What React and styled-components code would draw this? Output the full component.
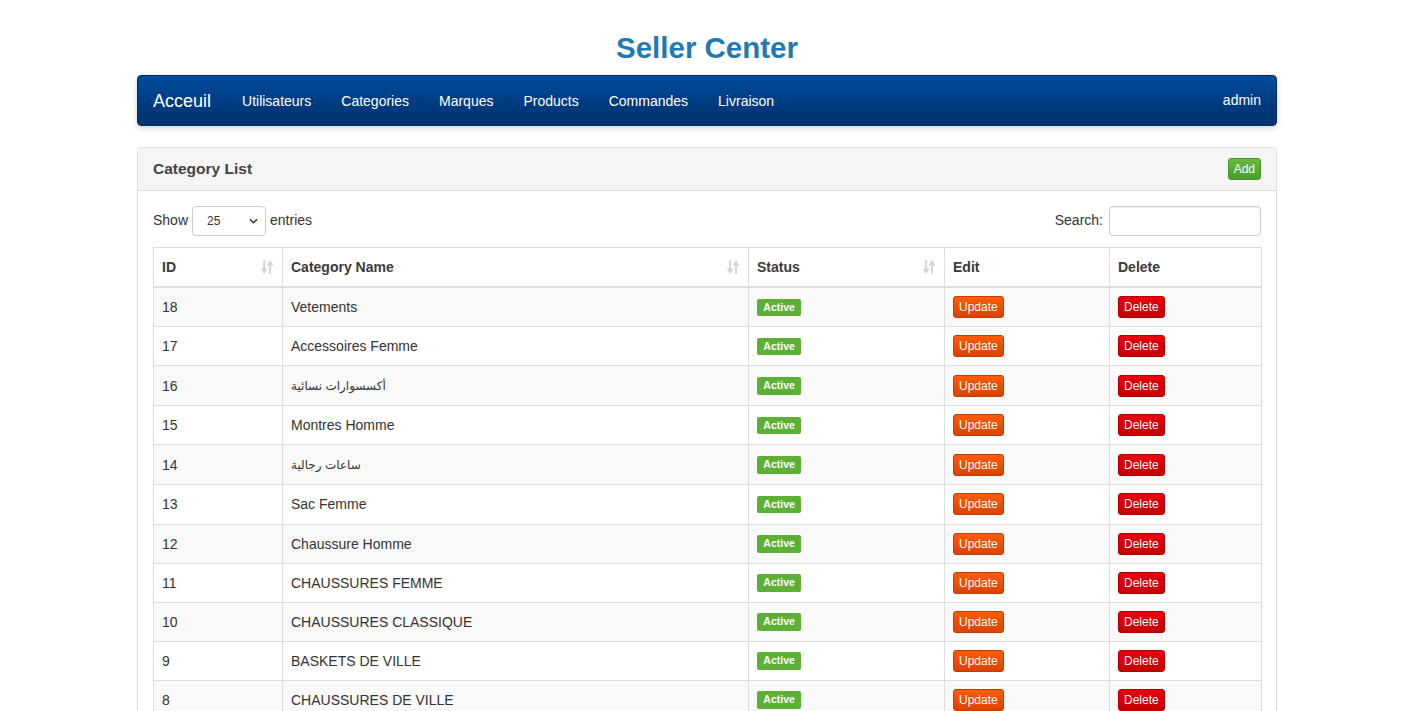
import React from 'react';
import styled, {createGlobalStyle} from 'styled-components';

const GlobalStyle = createGlobalStyle`
    html, body {
        margin: 0;
        padding: 0;
        overflow: hidden;
        background: #fff;
    }
    body {
        font-family: "Liberation Sans", Arial, "DejaVu Sans", sans-serif;
        font-size: 14px;
        line-height: 1.42857;
        color: #333;
    }
    * { box-sizing: border-box; }
`;

const categories = [
    {id: 18, name: 'Vetements'},
    {id: 17, name: 'Accessoires Femme'},
    {id: 16, name: 'أكسسوارات نسائية', arabic: true},
    {id: 15, name: 'Montres Homme'},
    {id: 14, name: 'ساعات رجالية', arabic: true},
    {id: 13, name: 'Sac Femme'},
    {id: 12, name: 'Chaussure Homme'},
    {id: 11, name: 'CHAUSSURES FEMME'},
    {id: 10, name: 'CHAUSSURES CLASSIQUE'},
    {id: 9, name: 'BASKETS DE VILLE'},
    {id: 8, name: 'CHAUSSURES DE VILLE'},
];

const navLinks = ['Utilisateurs', 'Categories', 'Marques', 'Products', 'Commandes', 'Livraison'];

const columns = [
    {label: 'ID', width: 129, sortable: true},
    {label: 'Category Name', width: 466, sortable: true},
    {label: 'Status', width: 196, sortable: true},
    {label: 'Edit', width: 165},
    {label: 'Delete', width: 152},
];

const SortIcon = () => (
    <SortSvg viewBox="0 0 14 16" width="14" height="16">
        <rect x="3.2" y="1" width="1.8" height="10" />
        <polygon points="0.6,9.5 7.6,9.5 4.1,15" />
        <rect x="9.2" y="5" width="1.8" height="10" />
        <polygon points="6.6,6.5 13.6,6.5 10.1,1" />
    </SortSvg>
);

const ChevronDown = () => (
    <Chevron viewBox="0 0 10 6" width="9" height="6">
        <polyline points="1,1 5,5 9,1" fill="none" stroke="#333" strokeWidth="1.6" />
    </Chevron>
);

export default function App() {
    return (
        <Page>
            <GlobalStyle/>
            <Container>
                <Title>Seller Center</Title>
                <Navbar>
                    <Brand>Acceuil</Brand>
                    <NavList>
                        {navLinks.map(l => <NavLink key={l}>{l}</NavLink>)}
                    </NavList>
                    <NavRight>admin</NavRight>
                </Navbar>

                <Panel>
                    <PanelHeading>
                        <PanelTitle>Category List</PanelTitle>
                        <Btn variant="add">Add</Btn>
                    </PanelHeading>
                    <PanelBody>
                        <Controls>
                            <Length>
                                Show
                                <SelectWrap>
                                    <Select defaultValue="25">
                                        <option>10</option>
                                        <option>25</option>
                                        <option>50</option>
                                        <option>100</option>
                                    </Select>
                                    <ChevronDown/>
                                </SelectWrap>
                                entries
                            </Length>
                            <SearchLabel>
                                Search:
                                <SearchInput type="search"/>
                            </SearchLabel>
                        </Controls>

                        <Table>
                            <colgroup>
                                {columns.map(c => <col key={c.label} style={{width: c.width}}/>)}
                            </colgroup>
                            <thead>
                            <tr>
                                {columns.map(c => (
                                    <Th key={c.label}>
                                        <ThInner>
                                            {c.label}
                                            {c.sortable && <SortIcon/>}
                                        </ThInner>
                                    </Th>
                                ))}
                            </tr>
                            </thead>
                            <tbody>
                            {categories.map((c, i) => (
                                <Row key={c.id} striped={i % 2 === 0}>
                                    <Td>{c.id}</Td>
                                    <Td><Name arabic={c.arabic}>{c.name}</Name></Td>
                                    <Td><Label>Active</Label></Td>
                                    <Td><Btn variant="update">Update</Btn></Td>
                                    <Td><Btn variant="delete">Delete</Btn></Td>
                                </Row>
                            ))}
                            </tbody>
                        </Table>
                    </PanelBody>
                </Panel>
            </Container>
        </Page>
    );
}

const Page = styled.div`
    padding-right: 13px;
`;

const Container = styled.div`
    width: 1140px;
    margin: 0 auto;
`;

const Title = styled.h2`
    margin: 0;
    padding-top: 31px;
    font-size: 29.5px;
    line-height: 33px;
    font-weight: bold;
    text-align: center;
    color: #1f7ab4;
`;

const Navbar = styled.nav`
    margin-top: 11px;
    height: 51px;
    display: flex;
    align-items: center;
    padding: 0 15px;
    border: 1px solid #002d63;
    border-radius: 4px;
    background: linear-gradient(to bottom, #004c9d 0%, #003a7f 60%, #00336f 100%);
    box-shadow: 0 2px 6px rgba(0, 0, 0, 0.18);
`;

const Brand = styled.a`
    font-size: 18px;
    color: #fff;
    padding-right: 16px;
    line-height: 20px;
`;

const NavList = styled.div`
    display: flex;
    flex: 1;
`;

const NavLink = styled.a`
    color: #fff;
    padding: 0 15px;
    font-size: 14px;
    line-height: 20px;
`;

const NavRight = styled.a`
    color: #fff;
    font-size: 14px;
`;

const Panel = styled.div`
    margin-top: 21px;
    border: 1px solid #ddd;
    border-radius: 4px;
    background: #fff;
`;

const PanelHeading = styled.div`
    display: flex;
    align-items: center;
    justify-content: space-between;
    padding: 10px 15px;
    height: 43px;
    background: #f5f5f5;
    border-bottom: 1px solid #ddd;
    border-radius: 3px 3px 0 0;
`;

const PanelTitle = styled.h3`
    margin: 0;
    font-size: 15.5px;
    font-weight: bold;
    color: #444;
    line-height: 1.1;
`;

const PanelBody = styled.div`
    padding: 15px;
`;

const Controls = styled.div`
    display: flex;
    justify-content: space-between;
    align-items: center;
    height: 30px;
    margin-bottom: 11px;
`;

const Length = styled.label`
    display: flex;
    align-items: center;
    gap: 4px;
`;

const SelectWrap = styled.span`
    position: relative;
    display: inline-flex;
`;

const Select = styled.select`
    appearance: none;
    width: 74px;
    height: 30px;
    padding: 0 10px 0 14px;
    font-family: "Liberation Sans", Arial, sans-serif;
    font-size: 12px;
    color: #333;
    background: #fff;
    border: 1px solid #ccc;
    border-radius: 4px;
`;

const Chevron = styled.svg`
    position: absolute;
    right: 8px;
    top: 12px;
    pointer-events: none;
`;

const SearchLabel = styled.label`
    display: flex;
    align-items: center;
    gap: 6px;
`;

const SearchInput = styled.input`
    width: 152px;
    height: 30px;
    border: 1px solid #ccc;
    border-radius: 4px;
    padding: 5px 10px;
    font-size: 12px;
    box-shadow: inset 0 1px 1px rgba(0, 0, 0, 0.075);
`;

const Table = styled.table`
    width: 1108px;
    table-layout: fixed;
    border-collapse: collapse;
    border: 1px solid #ddd;
`;

const Th = styled.th`
    text-align: left;
    font-weight: bold;
    padding: 9px 8px;
    border: 1px solid #ddd;
    border-bottom: 2px solid #ddd;
    line-height: 20px;
    color: #3a3a3a;
`;

const ThInner = styled.div`
    display: flex;
    align-items: center;
    justify-content: space-between;
`;

const SortSvg = styled.svg`
    fill: #d4d4d4;
`;

const Row = styled.tr`
    background: ${props => props.striped ? '#f9f9f9' : '#fff'};
`;

const Td = styled.td`
    padding: 8px 8px 8.1px;
    border: 1px solid #ddd;
    line-height: 22px;
    vertical-align: middle;
`;

const Name = styled.span`
    font-size: ${props => props.arabic ? '12px' : '14px'};
`;

const Label = styled.span`
    display: inline-block;
    vertical-align: top;
    margin-top: 2.5px;
    font-size: 10.5px;
    font-weight: bold;
    line-height: 1;
    padding: 3px 6.3px 4px;
    color: #fff;
    background: #5cb035;
    border-radius: 2px;
`;

const buttonColors = {
    add: ['#66bb40', '#4c9d2b', '#48962a'],
    update: ['#ff5c08', '#d94300', '#c43d00'],
    delete: ['#ea0010', '#c40000', '#b30000'],
};

const Btn = styled.button`
    display: inline-block;
    vertical-align: top;
    font-family: "Liberation Sans", Arial, sans-serif;
    font-size: 12px;
    line-height: 18px;
    height: 22px;
    padding: 1px 5px;
    color: #fff;
    border-radius: 3px;
    cursor: pointer;
    border: 1px solid ${props => buttonColors[props.variant][2]};
    background: linear-gradient(to bottom, ${props => buttonColors[props.variant][0]}, ${props => buttonColors[props.variant][1]});
    text-shadow: 0 -1px 0 rgba(0, 0, 0, 0.15);
`;
